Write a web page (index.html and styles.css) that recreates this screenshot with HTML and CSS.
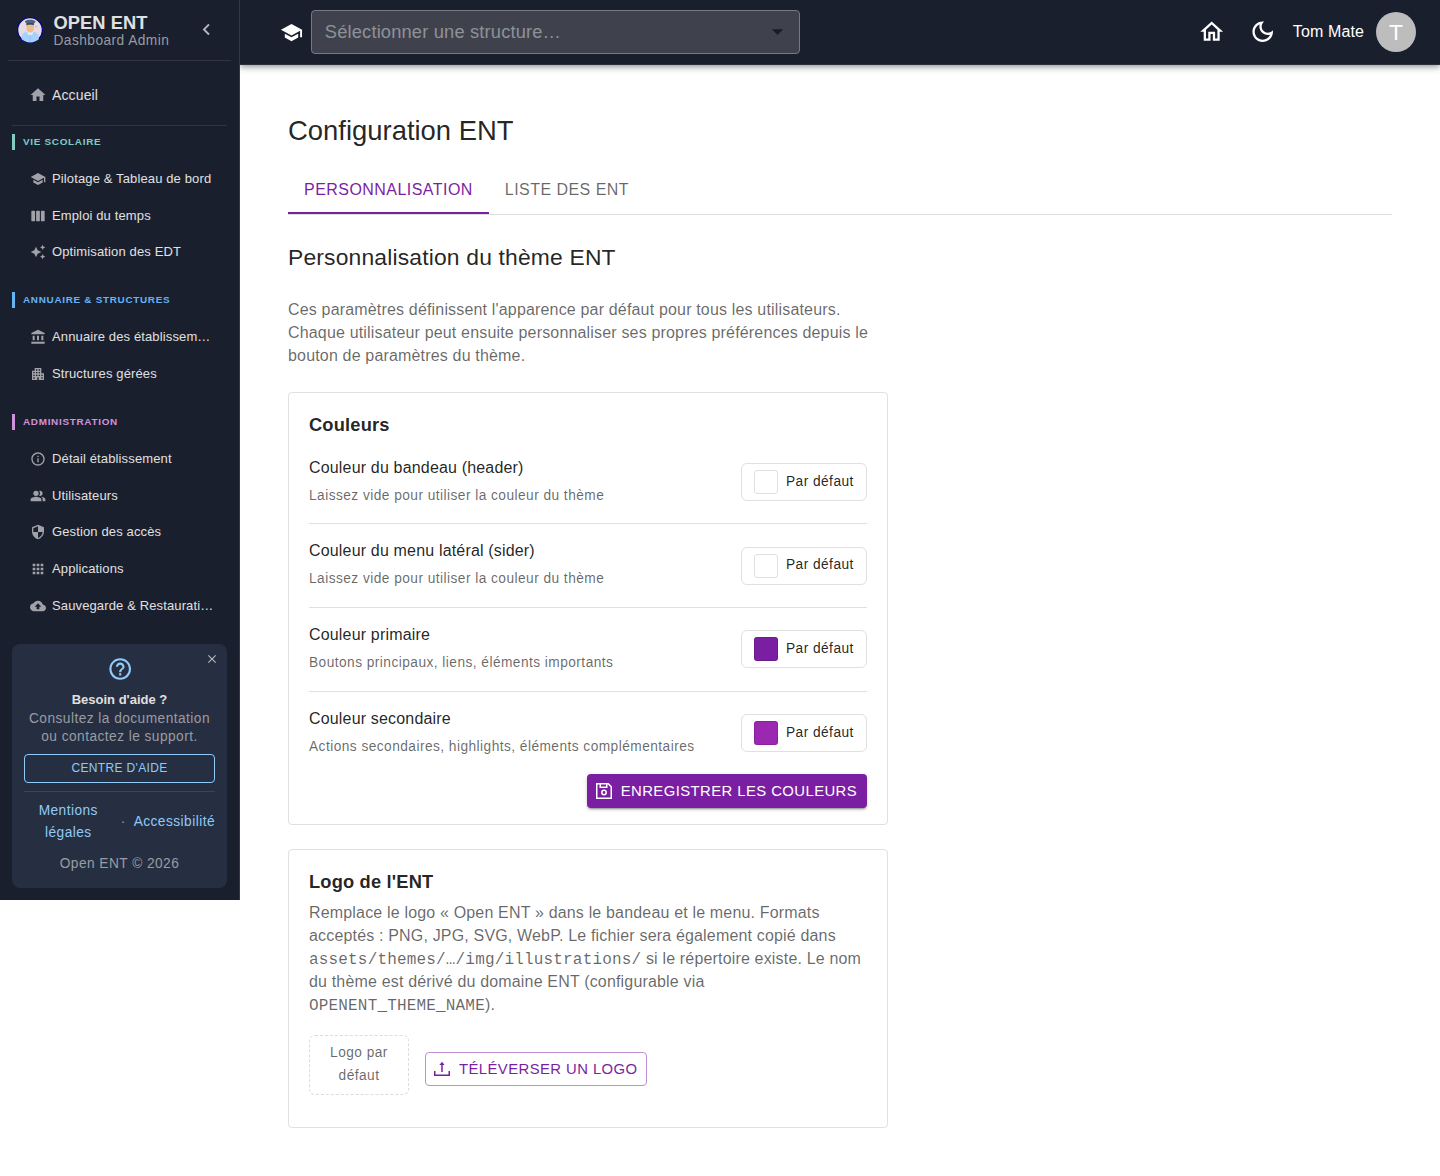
FILE: index.html
```html
<!DOCTYPE html>
<html lang="fr">
<head>
<meta charset="utf-8">
<title>Configuration ENT</title>
<link rel="stylesheet" href="styles.css">
</head>
<body>
<div class="app">
  <aside class="sider">
    <div class="brand">
      <svg class="brand-logo" viewBox="0 0 28 28">
        <circle cx="14" cy="14" r="12.4" fill="#e4dce1" stroke="#00008b" stroke-width="1.300"/>
        <path d="M5.600 23.300c0-4.500 1.200-6.500 4.900-7.300h7.500c3.700.8 4.900 2.800 4.900 7.300-2.300 2-5.400 3.100-8.700 3.100s-6.300-1.100-8.600-3.100z" fill="#a6d0fd"/>
        <path d="M11 15.500h6.400l-.9 2.900-2.300 1.200-2.300-1.200z" fill="#d8ecfb"/>
        <path d="M14.200 19v7" stroke="#8fbdf0" stroke-width=".7"/>
        <path d="M10.600 8h7.200v4.700c0 2.200-1.600 3.900-3.600 3.900s-3.600-1.700-3.600-3.900z" fill="#efbb8a"/>
        <path d="M8.700 5.400c1.700-2.200 9.300-2.200 11 0L18 7.400v1.900c-2.200-.7-5.400-.7-7.600 0V7.400z" fill="#4f657c"/>
        <path d="M10.500 8.200c2.200-.9 5.200-.9 7.400 0" fill="none" stroke="#2f4257" stroke-width="1"/>
        <path d="M19 10.500l1.600.5M19.900 9.800v1.600" stroke="#c9a6e8" stroke-width=".8"/>
      </svg>
      <div class="brand-text">
        <div class="brand-name">OPEN ENT</div>
        <div class="brand-sub">Dashboard Admin</div>
      </div>
      <svg class="brand-toggle" viewBox="0 0 24 24"><path d="M15.410 7.410 14 6l-6 6 6 6 1.410-1.410L10.830 12z"/></svg>
    </div>

    <nav class="menu">
      <a class="item item-home"><svg viewBox="0 0 24 24"><path d="M10 20v-6h4v6h5v-8h3L12 3 2 12h3v8z"/></svg><span>Accueil</span></a>
      <div class="menu-divider"></div>

      <div class="section section-teal">Vie scolaire</div>
      <a class="item"><svg viewBox="0 0 24 24"><path d="M5 13.180v4L12 21l7-3.820v-4L12 17zM12 3 1 9l11 6 9-4.910V17h2V9z"/></svg><span>Pilotage &amp; Tableau de bord</span></a>
      <a class="item"><svg viewBox="0 0 24 24"><rect x="2" y="4" width="5.600" height="16" rx="1.400"/><rect x="9.200" y="4" width="5.600" height="16" rx="1.400"/><rect x="16.400" y="4" width="5.600" height="16" rx="1.400"/></svg><span>Emploi du temps</span></a>
      <a class="item"><svg viewBox="0 0 24 24"><path d="m19 9 1.250-2.750L23 5l-2.750-1.250L19 1l-1.250 2.750L15 5l2.750 1.250zm-7.500.5L9 4 6.500 9.500 1 12l5.500 2.500L9 20l2.500-5.500L17 12zM19 15l-1.250 2.750L15 19l2.750 1.250L19 23l1.250-2.750L23 19l-2.750-1.250z"/></svg><span>Optimisation des EDT</span></a>

      <div class="section section-blue">Annuaire &amp; structures</div>
      <a class="item"><svg viewBox="0 0 24 24"><path d="M4 10h3v7H4zm6.500 0h3v7h-3zM2 19h20v3H2zm15-9h3v7h-3zm-5-9L2 6v2h20V6z"/></svg><span>Annuaire des établissements</span></a>
      <a class="item"><svg viewBox="0 0 24 24"><path d="M17 11V3H7v4H3v14h8v-4h2v4h8V11zM7 19H5v-2h2zm0-4H5v-2h2zm0-4H5V9h2zm4 4H9v-2h2zm0-4H9V9h2zm0-4H9V5h2zm4 8h-2v-2h2zm0-4h-2V9h2zm0-4h-2V5h2zm4 12h-2v-2h2zm0-4h-2v-2h2z"/></svg><span>Structures gérées</span></a>

      <div class="section section-pink">Administration</div>
      <a class="item"><svg viewBox="0 0 24 24"><path d="M11 7h2v2h-2zm0 4h2v6h-2zm1-9C6.480 2 2 6.480 2 12s4.480 10 10 10 10-4.480 10-10S17.520 2 12 2m0 18c-4.410 0-8-3.590-8-8s3.590-8 8-8 8 3.590 8 8-3.590 8-8 8"/></svg><span>Détail établissement</span></a>
      <a class="item"><svg viewBox="0 0 24 24"><path d="M16.670 13.130C18.040 14.060 19 15.320 19 17v3h4v-3c0-2.180-3.570-3.470-6.330-3.870M15 12c2.210 0 4-1.790 4-4s-1.790-4-4-4c-.47 0-.91.1-1.330.24C14.500 5.270 15 6.580 15 8s-.5 2.730-1.330 3.760c.42.14.86.24 1.330.24"/><circle cx="9" cy="8" r="4"/><path d="M9 13c-2.670 0-8 1.340-8 4v3h16v-3c0-2.660-5.330-4-8-4"/></svg><span>Utilisateurs</span></a>
      <a class="item"><svg viewBox="0 0 24 24"><path d="M12 1 3 5v6c0 5.550 3.840 10.740 9 12 5.160-1.260 9-6.450 9-12V5zm0 10.990h7c-.53 4.120-3.280 7.790-7 8.940V12H5V6.300l7-3.110z"/></svg><span>Gestion des accès</span></a>
      <a class="item"><svg viewBox="0 0 24 24"><path d="M4 8h4V4H4zm6 12h4v-4h-4zm-6 0h4v-4H4zm0-6h4v-4H4zm6 0h4v-4h-4zm6-10v4h4V4zm-6 4h4V4h-4zm6 6h4v-4h-4zm0 6h4v-4h-4z"/></svg><span>Applications</span></a>
      <a class="item"><svg viewBox="0 0 24 24"><path d="M19.350 10.040C18.670 6.590 15.640 4 12 4 9.110 4 6.600 5.640 5.350 8.040 2.340 8.360 0 10.910 0 14c0 3.310 2.690 6 6 6h13c2.760 0 5-2.240 5-5 0-2.640-2.050-4.780-4.650-4.960M14 13v4h-4v-4H7l5-5 5 5z"/></svg><span>Sauvegarde &amp; Restauration</span></a>
    </nav>

    <div class="help">
      <svg class="help-close" viewBox="0 0 24 24"><path d="M19 6.410 17.590 5 12 10.590 6.410 5 5 6.410 10.590 12 5 17.590 6.410 19 12 13.410 17.590 19 19 17.590 13.410 12z"/></svg>
      <svg class="help-icon" viewBox="0 0 24 24"><path d="M11 18h2v-2h-2zm1-16C6.480 2 2 6.480 2 12s4.480 10 10 10 10-4.480 10-10S17.520 2 12 2m0 18c-4.410 0-8-3.590-8-8s3.590-8 8-8 8 3.590 8 8-3.590 8-8 8m0-14c-2.210 0-4 1.790-4 4h2c0-1.100.9-2 2-2s2 .9 2 2c0 2-3 1.750-3 5h2c0-2.250 3-2.500 3-5 0-2.210-1.790-4-4-4"/></svg>
      <div class="help-title">Besoin d'aide ?</div>
      <div class="help-text">Consultez la documentation ou contactez le support.</div>
      <a class="help-button">Centre d'aide</a>
      <div class="help-links"><a>Mentions légales</a><span>·</span><a>Accessibilité</a></div>
      <div class="help-copy">Open ENT © 2026</div>
    </div>
  </aside>

  <div class="page">
    <header class="topbar">
      <svg class="topbar-school" viewBox="0 0 24 24"><path d="M5 13.180v4L12 21l7-3.820v-4L12 17zM12 3 1 9l11 6 9-4.910V17h2V9z"/></svg>
      <div class="select"><span>Sélectionner une structure…</span><svg viewBox="0 0 24 24"><path d="m7 10 5 5 5-5z"/></svg></div>
      <div class="topbar-right">
        <svg class="topbar-icon" viewBox="0 0 24 24"><path d="m12 5.690 5 4.500V18h-2v-6H9v6H7v-7.810zM12 3 2 12h3v8h6v-6h2v6h6v-8h3z"/></svg>
        <svg class="topbar-icon" viewBox="0 0 24 24"><path d="M9.370 5.510c-.18.640-.27 1.310-.27 1.990 0 4.080 3.320 7.400 7.400 7.400.68 0 1.350-.09 1.990-.27C17.450 17.190 14.930 19 12 19c-3.860 0-7-3.140-7-7 0-2.930 1.810-5.450 4.370-6.490M12 3c-4.970 0-9 4.030-9 9s4.030 9 9 9 9-4.030 9-9c0-.46-.04-.92-.1-1.360-.98 1.370-2.580 2.260-4.400 2.260-2.980 0-5.400-2.420-5.400-5.400 0-1.810.89-3.420 2.260-4.400-.44-.06-.9-.1-1.360-.1"/></svg>
        <span class="user-name">Tom Mate</span>
        <span class="avatar">T</span>
      </div>
    </header>

    <main class="content">
      <h1>Configuration ENT</h1>
      <div class="tabs"><a class="tab tab-active">Personnalisation</a><a class="tab">Liste des ENT</a></div>
      <h2>Personnalisation du thème ENT</h2>
      <p class="intro">Ces paramètres définissent l'apparence par défaut pour tous les utilisateurs. Chaque utilisateur peut ensuite personnaliser ses propres préférences depuis le bouton de paramètres du thème.</p>

      <section class="card card-colors">
        <h3>Couleurs</h3>
        <div class="row"><div class="row-text"><div class="row-label">Couleur du bandeau (header)</div><div class="row-hint">Laissez vide pour utiliser la couleur du thème</div></div><a class="picker"><i class="swatch"></i><span>Par défaut</span></a></div>
        <div class="row"><div class="row-text"><div class="row-label">Couleur du menu latéral (sider)</div><div class="row-hint">Laissez vide pour utiliser la couleur du thème</div></div><a class="picker"><i class="swatch"></i><span>Par défaut</span></a></div>
        <div class="row"><div class="row-text"><div class="row-label">Couleur primaire</div><div class="row-hint">Boutons principaux, liens, éléments importants</div></div><a class="picker"><i class="swatch swatch-primary"></i><span>Par défaut</span></a></div>
        <div class="row"><div class="row-text"><div class="row-label">Couleur secondaire</div><div class="row-hint">Actions secondaires, highlights, éléments complémentaires</div></div><a class="picker"><i class="swatch swatch-secondary"></i><span>Par défaut</span></a></div>
        <div class="actions">
          <a class="button button-filled"><svg viewBox="0 0 18 18" fill="none" stroke="currentColor" stroke-width="1.500"><path d="M1.750 1.750h11.500l3 3v11.500H1.750z"/><path d="M5.250 1.750v3.500h6.500v-3.500"/><circle cx="9" cy="10.500" r="2.200"/></svg>Enregistrer les couleurs</a>
        </div>
      </section>

      <section class="card card-logo">
        <h3>Logo de l'ENT</h3>
        <p>Remplace le logo « Open ENT » dans le bandeau et le menu. Formats acceptés : PNG, JPG, SVG, WebP. Le fichier sera également copié dans <code>assets/themes/…/img/illustrations/</code> si le répertoire existe. Le nom du thème est dérivé du domaine ENT (configurable via <code>OPENENT_THEME_NAME</code>).</p>
        <div class="logo-row">
          <div class="logo-box">Logo par défaut</div>
          <a class="button button-outlined"><svg viewBox="0 0 18 18" fill="none" stroke="currentColor" stroke-width="1.500"><path d="M1.750 11v4.250h14.500V11"/><path d="M9 12V3.500"/><path d="M6.400 5 9 1.800 11.600 5z" fill="currentColor" stroke="none"/></svg>Téléverser un logo</a>
        </div>
      </section>
    </main>
  </div>
</div>
</body>
</html>
```
FILE: styles.css
```css
* { box-sizing: border-box; }
body {
  margin: 0;
  background: #fff;
  color: rgba(0, 0, 0, .87);
  font-family: "Liberation Sans", Arial, sans-serif;
  font-size: 16px;
}
svg { display: block; fill: currentColor; flex: none; }
svg[fill="none"] { fill: none; }
h1, h2, h3, p { margin: 0; font-weight: 400; }

.app { display: flex; align-items: flex-start; height: 1176px; overflow: hidden; }

/* Side menu */
.sider {
  display: flex;
  flex-direction: column;
  flex: none;
  width: 240px;
  height: 900px;
  padding-bottom: 12px;
  background: #1a1f2e;
  border-right: 1px solid #343845;
  color: #e0e0e0;
}
.brand {
  display: flex;
  align-items: center;
  flex: none;
  height: 61px;
  margin: 0 8px;
  padding: 0 0 0 8px;
  border-bottom: 1px solid #313541;
}
.brand-logo { width: 28px; height: 28px; }
.brand-text { margin-left: 9.5px; flex: 1; padding-top: 1px; }
.brand-name { font-size: 18.29px; font-weight: 700; line-height: 20px; letter-spacing: .05px; }
.brand-sub { font-size: 13.71px; line-height: 16px; letter-spacing: .457px; color: #999ba0; }
.brand-toggle { width: 22.86px; height: 22.86px; margin: -1px 13px 0 0; color: #b5b7bb; }

.menu { flex: none; padding: 0 12px; }
.item {
  display: flex;
  align-items: center;
  height: 36.6px;
  padding: 0 13px 0 18px;
  gap: 6px;
  font-size: 13px;
  letter-spacing: .13px;
}
.item svg { width: 16px; height: 16px; color: #a0a2a8; }
.item span { overflow: hidden; text-overflow: ellipsis; white-space: nowrap; line-height: 20px; }
.item-home { height: 40px; margin: 14px 0 10px; padding-left: 17px; gap: 5px; font-size: 14px; }
.item-home svg { width: 18px; height: 18px; margin-top: -1px; }
.menu-divider { height: 1px; background: #313541; margin-bottom: 8px; }
.section {
  height: 16px;
  margin-bottom: 11px;
  padding-left: 8px;
  border-left: 3px solid;
  font-size: 9.92px;
  font-weight: 700;
  line-height: 16px;
  letter-spacing: .7px;
  text-transform: uppercase;
}
.item + .section { margin-top: 21.2px; }
.item + .section-pink { margin-top: 21.7px; }
.section-teal { color: #80cbc4; }
.section-blue { color: #64b5f6; }
.section-pink { color: #ce93d8; }

.help {
  position: relative;
  flex: none;
  height: 244px;
  margin: auto 12px 0;
  padding: 12px 12px 0;
  border-radius: 8px;
  background: #262f41;
  text-align: center;
}
.help-close { position: absolute; top: 8px; right: 8px; width: 14px; height: 14px; color: #b5b8be; }
.help-icon { width: 26.4px; height: 26px; margin-left: 82.8px; color: #90caf9; }
.help-title { margin-top: 8px; font-size: 13px; font-weight: 700; line-height: 19px; }
.help-text { padding-top: 1px; margin-bottom: 8px; font-size: 13.71px; line-height: 17.8px; letter-spacing: .457px; color: #999ca3; }
.help-button {
  display: block;
  height: 29px;
  border: 1px solid #90caf9;
  border-radius: 4px;
  color: #90caf9;
  font-size: 12px;
  line-height: 27px;
  letter-spacing: .343px;
  text-transform: uppercase;
}
.help-links {
  display: flex;
  align-items: center;
  gap: 8px;
  margin-top: 8px;
  padding-top: 8px;
  border-top: 1px solid #3c4453;
  color: #90caf9;
  font-size: 13.71px;
  line-height: 22px;
  letter-spacing: .457px;
}
.help-links a:first-child { flex: 1; }
.help-links span { color: #999ca3; }
.help-copy { margin-top: 9px; font-size: 13.71px; line-height: 22px; letter-spacing: .457px; color: #999ca3; }

/* Top bar */
.page { flex: 1; }
.topbar {
  display: flex;
  align-items: center;
  height: 65px;
  padding: 0 24px 1px 40px;
  background: #1a1f2e;
  color: #fff;
  border-bottom: 1px solid #2a303d;
  box-shadow: 0 2px 4px -1px rgba(0, 0, 0, .2), 0 4px 5px rgba(0, 0, 0, .14), 0 1px 10px rgba(0, 0, 0, .12);
  clip-path: inset(0 0 -20px 0);
}
.topbar-school { width: 23px; height: 23px; margin-top: 1px; }
.select {
  display: flex;
  align-items: center;
  justify-content: space-between;
  width: 489px;
  height: 44px;
  margin-left: 8px;
  padding: 0 8px 0 12.800px;
  border: 1px solid #757984;
  border-radius: 4px;
  background: #3f424d;
  color: #8f9198;
  font-size: 18.29px;
  letter-spacing: .17px;
}
.select svg { width: 27px; height: 27px; color: #1b1d23; }
.topbar-right { display: flex; align-items: center; margin-left: auto; }
.topbar-icon { width: 27.4px; height: 27.4px; margin-right: 24px; }
.topbar-icon + .topbar-icon { margin-right: 16.400px; }
.user-name { margin-right: 12px; font-size: 16px; letter-spacing: .12px; }
.avatar { width: 40px; height: 40px; border-radius: 50%; background: #bdbdbd; font-size: 22.86px; line-height: 41px; text-align: center; }

/* Page content */
.content { padding: 47px 48px; }
h1 { font-size: 27.43px; line-height: 37px; }
.tabs { display: flex; height: 50px; margin-top: 16px; border-bottom: 1px solid #dedede; }
.tab {
  height: 49px;
  padding: 0 16px;
  color: rgba(0, 0, 0, .6);
  line-height: 49px;
  letter-spacing: .457px;
  text-transform: uppercase;
}
.tab-active { border-bottom: 2px solid #7b1fa2; color: #7b1fa2; }
h2 { margin-top: 24px; font-size: 22.86px; line-height: 37px; letter-spacing: .171px; }
.intro { width: 600px; margin-top: 23px; color: rgba(0, 0, 0, .6); line-height: 22.9px; letter-spacing: .171px; }
.card { width: 600px; padding: 20px; border: 1px solid #e0e0e0; border-radius: 4px; }
.card-colors { height: 433px; margin-top: 24px; padding-top: 17px; }
.card-logo { height: 279px; margin-top: 24px; padding-top: 17px; }
h3 { font-size: 18.29px; font-weight: 700; line-height: 30px; letter-spacing: .171px; }
.card-colors h3 { margin-bottom: .5px; }
.row { display: flex; justify-content: space-between; align-items: center; height: 83.8px; padding-top: 1px; border-bottom: 1px solid #e0e0e0; }
.row:nth-last-child(2) { border-bottom-color: transparent; }
.row-text { margin-bottom: 1.1px; }
.row-label { line-height: 28px; letter-spacing: .171px; }
.row-hint { color: rgba(0, 0, 0, .6); font-size: 13.71px; line-height: 28px; letter-spacing: .457px; }
.picker {
  display: flex;
  align-items: center;
  gap: 8px;
  width: 126px;
  height: 38px;
  margin-bottom: .5px;
  padding-left: 12px;
  border: 1px solid #e0e0e0;
  border-radius: 6px;
  font-size: 13.71px;
  letter-spacing: .457px;
}
.picker span { padding-bottom: 1.6px; }
.swatch { width: 24px; height: 24px; border: 1px solid rgba(0, 0, 0, .12); border-radius: 3px; }
.swatch-primary { background: #7b1fa2; }
.swatch-secondary { background: #9c27b0; }
.actions { display: flex; justify-content: flex-end; margin-top: -1.7px; }
.button {
  display: flex;
  align-items: center;
  gap: 8px;
  height: 34px;
  padding: 0 9.900px 0 8px;
  border-radius: 4px;
  font-size: 14.86px;
  letter-spacing: .424px;
  text-transform: uppercase;
}
.button svg { width: 18px; height: 18px; }
.button-filled {
  background: #7b1fa2;
  color: #fff;
  box-shadow: 0 3px 1px -2px rgba(0, 0, 0, .2), 0 2px 2px rgba(0, 0, 0, .14), 0 1px 5px rgba(0, 0, 0, .12);
}
.button-outlined { padding: 0 8.500px 0 7px; border: 1px solid #bd8fd0; color: #7b1fa2; }
.card-logo p { margin-top: 5.1px; color: rgba(0, 0, 0, .6); line-height: 22.88px; letter-spacing: .171px; }
code { font-family: "Liberation Mono", monospace; font-size: 16px; }
.logo-row { display: flex; align-items: center; gap: 16px; margin-top: 16.4px; }
.logo-box {
  width: 100px;
  height: 60px;
  padding: 5px 16px;
  border: 1px dashed #dcdcdc;
  border-radius: 6px;
  color: rgba(0, 0, 0, .6);
  font-size: 13.71px;
  line-height: 23px;
  letter-spacing: .457px;
  text-align: center;
}
.logo-row .button { margin-top: 8px; }
```
